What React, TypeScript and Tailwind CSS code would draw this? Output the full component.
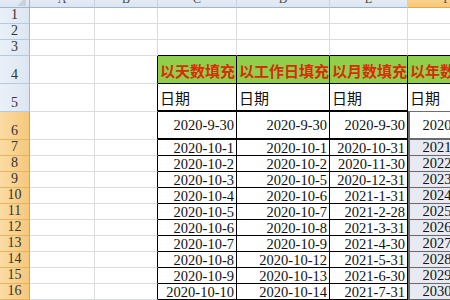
import React from 'react';

const COLS = ['A', 'B', 'C', 'D', 'E', 'F'];
const C_DATA = ['2020-9-30', '2020-10-1', '2020-10-2', '2020-10-3', '2020-10-4', '2020-10-5', '2020-10-6', '2020-10-7', '2020-10-8', '2020-10-9', '2020-10-10'];
const D_DATA = ['2020-9-30', '2020-10-1', '2020-10-2', '2020-10-5', '2020-10-6', '2020-10-7', '2020-10-8', '2020-10-9', '2020-10-12', '2020-10-13', '2020-10-14'];
const E_DATA = ['2020-9-30', '2020-10-31', '2020-11-30', '2020-12-31', '2021-1-31', '2021-2-28', '2021-3-31', '2021-4-30', '2021-5-31', '2021-6-30', '2021-7-31'];
const F_DATA = ['2020-9-30', '2021-9-30', '2022-9-30', '2023-9-30', '2024-9-30', '2025-9-30', '2026-9-30', '2027-9-30', '2028-9-30', '2029-9-30', '2030-9-30'];
const TITLES = ['以天数填充', '以工作日填充', '以月数填充', '以年数填充'];

const rowHeight = (r: number) => (r >= 4 && r <= 6 ? 'h-[28px]' : 'h-[16px]');
const num = "font-['Liberation_Serif',serif] text-[14.5px] text-[#111]";
const cjk = "font-['Noto_Sans_CJK_SC',sans-serif]";

function RowHeader({ r }: { r: number }) {
  const sel = r >= 6;
  return (
    <div
      className={`${rowHeight(r)} flex items-end justify-center pb-[1px] border-b border-r ${
        sel
          ? 'bg-gradient-to-r from-[#fbdca4] to-[#f6c77a] border-b-[#e6b35e] border-r-[#d9a24c]'
          : 'bg-gradient-to-r from-[#eaf0f8] to-[#dde6f2] border-b-[#b9c9dc] border-r-[#9eb6ce]'
      } font-['Liberation_Serif',serif] text-[14px] leading-none text-[#333]`}
    >
      {r}
    </div>
  );
}

function Plain({ r, col }: { r: number; col: number }) {
  // col 1 = A, 2 = B
  const rightBlack = col === 2 && r >= 4;
  return (
    <div
      className={`${rowHeight(r)} bg-white border-b border-r border-b-[#dadcdd] ${
        rightBlack ? 'border-r-black' : 'border-r-[#dadcdd]'
      }`}
    />
  );
}

function TableCell({ r, col }: { r: number; col: number }) {
  // col 3..6 => C..F
  const i = col - 3;
  const isF = col === 6;
  if (r <= 3) {
    return (
      <div
        className={`${rowHeight(r)} bg-white border-r border-r-[#dadcdd] ${
          r === 3 ? 'border-b border-b-black' : 'border-b border-b-[#dadcdd]'
        }`}
      />
    );
  }
  if (r === 4) {
    return (
      <div
        className={`${rowHeight(r)} bg-[#8fcf4c] border-b border-r border-black flex items-center pl-[2px] pt-[3px] overflow-hidden whitespace-nowrap ${cjk} text-[15px] font-bold text-[#d82c08]`}
      >
        {TITLES[i]}
      </div>
    );
  }
  if (r === 5) {
    return (
      <div
        className={`${rowHeight(r)} bg-white border-r border-black ${
          isF ? 'border-b border-b-[#6e6e6e]' : 'border-b-2 border-b-black'
        } flex items-center pl-[2px] pt-[2px] overflow-hidden whitespace-nowrap ${cjk} text-[15px] text-[#111]`}
      >
        日期
      </div>
    );
  }
  const data = [C_DATA, D_DATA, E_DATA, F_DATA][i][r - 6];
  if (isF) {
    return (
      <div
        className={`${rowHeight(r)} ${r === 6 ? 'bg-white border-b-2' : 'bg-[#e7eaf3] border-b'} border-b-[#6a6a6a] border-l-2 border-l-[#6a6a6a] flex items-center justify-end pr-[3px] whitespace-nowrap ${num} leading-none`}
      >
        {data}
      </div>
    );
  }
  return (
    <div
      className={`${rowHeight(r)} bg-white border-r border-black ${
        r === 6 ? 'border-b-2' : 'border-b'
      } border-b-black flex items-center justify-end pr-[2px] pt-[1px] whitespace-nowrap ${num} leading-none`}
    >
      {data}
    </div>
  );
}

export default function App() {
  const rows = Array.from({ length: 16 }, (_, k) => k + 1);
  return (
    <div className="w-[450px] h-[300px] overflow-hidden bg-white">
      <div className="grid grid-cols-[30px_65px_63px_79px_93px_78px_78px] w-[486px] -mt-[12px]">
        {/* column headers */}
        <div className="h-[20px] bg-gradient-to-b from-[#f2f5fa] to-[#dce5f1] border-b border-r border-[#9eb6ce] flex items-end justify-end pr-[3px] pb-[1px]">
          <svg width="9" height="9" viewBox="0 0 9 9">
            <polygon points="9,0 9,9 0,9" fill="#c8d2df" />
          </svg>
        </div>
        {COLS.map((c) => (
          <div
            key={c}
            className={`h-[20px] flex items-end justify-center pb-[2px] border-b border-r ${
              c === 'F'
                ? 'bg-gradient-to-b from-[#fde3b0] to-[#f7c878] border-b-[#e0a850] border-r-[#d9a24c]'
                : 'bg-gradient-to-b from-[#f2f5fa] to-[#dce5f1] border-b-[#9eb6ce] border-r-[#c5d3e2]'
            } font-['Liberation_Serif',serif] text-[12px] leading-none text-[#4a4a4a]`}
          >
            {c}
          </div>
        ))}
        {rows.map((r) => (
          <React.Fragment key={r}>
            <RowHeader r={r} />
            <Plain r={r} col={1} />
            <Plain r={r} col={2} />
            <TableCell r={r} col={3} />
            <TableCell r={r} col={4} />
            <TableCell r={r} col={5} />
            <TableCell r={r} col={6} />
          </React.Fragment>
        ))}
      </div>
    </div>
  );
}
